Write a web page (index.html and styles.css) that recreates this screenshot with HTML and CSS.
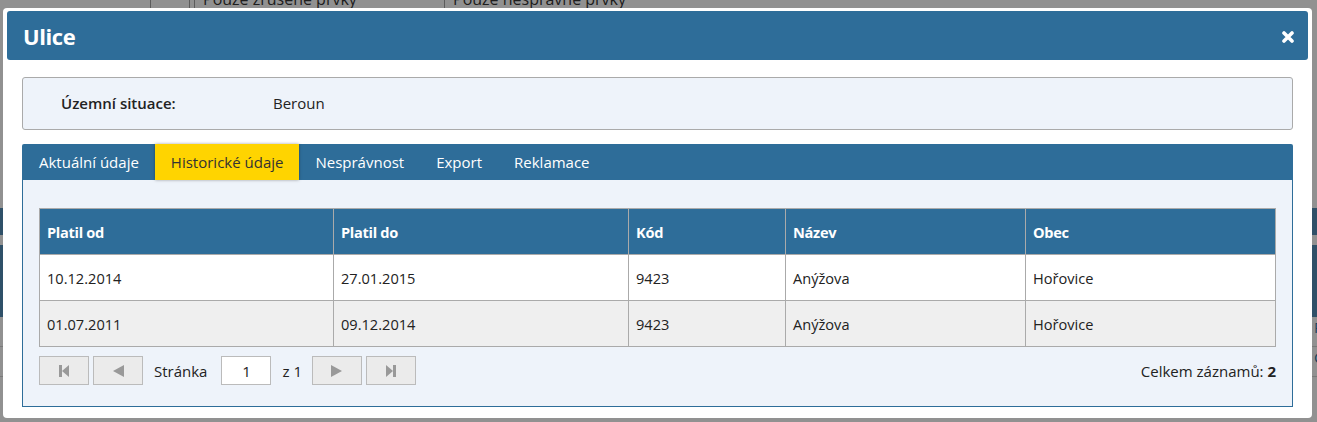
FILE: index.html
```html
<!DOCTYPE html>
<html lang="cs">
<head>
<meta charset="utf-8">
<title>Ulice</title>
<link rel="stylesheet" href="styles.css">
</head>
<body>
<div class="page">
  <div class="page-filters">
    <span class="pf-caret">▼</span>
    <span class="pf-sep"></span>
    <span class="pf-item">Pouze zrušené prvky</span>
    <span class="pf-item">Pouze nesprávné prvky</span>
  </div>
  <div class="page-band band1"></div>
  <div class="page-band band2"></div>
  <div class="page-line">Po</div>
  <div class="page-line">Ce</div>
</div>
<div class="overlay"></div>

<div class="dialog">
  <div class="dlg-header">
    <h1 class="dlg-title">Ulice</h1>
    <span class="dlg-close" aria-label="Zavřít">
      <svg width="12" height="12" viewBox="0 0 12 12"><path d="M2 2 L10 10 M10 2 L2 10" stroke="#fff" stroke-width="3.6" stroke-linecap="round"/></svg>
    </span>
  </div>
  <div class="dlg-body">
    <div class="info">
      <span class="info-label">Územní situace:</span>
      <span class="info-value">Beroun</span>
    </div>
    <div class="tabs">
      <div class="tab-bar">
        <span class="tab">Aktuální údaje</span>
        <span class="tab active">Historické údaje</span>
        <span class="tab">Nesprávnost</span>
        <span class="tab">Export</span>
        <span class="tab">Reklamace</span>
      </div>
      <div class="tab-content">
        <table class="grid">
          <colgroup>
            <col style="width:294px"><col style="width:295px"><col style="width:157px"><col style="width:240px"><col>
          </colgroup>
          <thead>
            <tr><th>Platil od</th><th>Platil do</th><th>Kód</th><th>Název</th><th>Obec</th></tr>
          </thead>
          <tbody>
            <tr><td>10.12.2014</td><td>27.01.2015</td><td>9423</td><td>Anýžova</td><td>Hořovice</td></tr>
            <tr class="alt"><td>01.07.2011</td><td>09.12.2014</td><td>9423</td><td>Anýžova</td><td>Hořovice</td></tr>
          </tbody>
        </table>
        <div class="pager">
          <div class="pager-left">
            <span class="pbtn"><svg width="12" height="14" viewBox="0 0 12 14"><rect x="1" y="1" width="3" height="12" fill="#999"/><path d="M11 1 L4 7 L11 13 Z" fill="#999"/></svg></span>
            <span class="pbtn"><svg width="14" height="14" viewBox="0 0 14 14"><path d="M13 1 L2 7 L13 13 Z" fill="#999"/></svg></span>
            <span class="plabel page-word">Stránka</span>
            <span class="pinput">1</span>
            <span class="plabel page-of">z 1</span>
            <span class="pbtn"><svg width="14" height="14" viewBox="0 0 14 14"><path d="M1 1 L12 7 L1 13 Z" fill="#999"/></svg></span>
            <span class="pbtn"><svg width="12" height="14" viewBox="0 0 12 14"><path d="M1 1 L8 7 L1 13 Z" fill="#999"/><rect x="8" y="1" width="3" height="12" fill="#999"/></svg></span>
          </div>
          <div class="pager-total">Celkem záznamů: <b>2</b></div>
        </div>
      </div>
    </div>
  </div>
</div>
</body>
</html>
```

FILE: styles.css
```css
* { box-sizing: border-box; }
html, body { margin: 0; padding: 0; }
body {
  width: 1317px;
  height: 422px;
  overflow: hidden;
  position: relative;
  font-family: "Open Sans", "Noto Sans", "Liberation Sans", sans-serif;
  font-size: 15px;
  color: #222;
  background: #f2f2f2;
}

/* background page (dimmed) */
.page { height: 100%; }
.page-filters {
  display: flex;
  align-items: flex-end;
  height: 8px;
  overflow: hidden;
  font-size: 16px;
  line-height: 18px;
  color: #333;
}
.pf-caret { width: 150px; text-align: right; font-size: 10px; padding-right: 10px; margin-bottom: 4px; }
.pf-sep { width: 40px; height: 18px; border-left: 1px solid #999; border-right: 1px solid #999; margin-right: 4px; }
.pf-item { width: 250px; padding-left: 8px; border-left: 1px solid #999; height: 18px; margin-top: -6px; }
.page-band { background: #4f86ad; margin-top: 200px; height: 27px; }
.page-band.band2 { margin-top: 10px; height: 72px; }
.page-line { height: 30px; border-bottom: 1px solid #ccc; padding-left: 1314px; color: #2e6d99; }
.overlay {
  position: absolute;
  inset: 0;
  background: rgba(0, 0, 0, 0.4);
}

/* dialog */
.dialog {
  position: absolute;
  left: 3px;
  top: 8px;
  width: 1309px;
  height: 410px;
  background: #fff;
  border-radius: 4px;
  padding: 3px 4px;
  display: flex;
  flex-direction: column;
}
.dlg-header {
  height: 49px;
  background: #2e6d99;
  border-radius: 3px;
  display: flex;
  align-items: center;
  justify-content: space-between;
  padding: 0 14px 0 16px;
}
.dlg-title {
  margin: 0;
  color: #fff;
  font-size: 22px;
  font-weight: 700;
  letter-spacing: -0.4px;
}
.dlg-close { display: flex; margin-top: 2px; }

.dlg-body {
  padding: 17px 15px 0;
  display: flex;
  flex-direction: column;
}
.info {
  height: 53px;
  background: #eef3fa;
  border: 1px solid #aaa;
  border-radius: 3px;
  display: flex;
  align-items: center;
  padding-left: 38px;
  padding-bottom: 1px;
}
.info-label { width: 212px; font-weight: 600; }

.tabs { margin-top: 14px; }
.tab-bar {
  height: 36px;
  background: #2e6d99;
  display: flex;
  padding-left: 1px;
  border-radius: 2px 2px 0 0;
}
.tab {
  padding: 0 16px;
  display: flex;
  align-items: center;
  color: #fff;
  padding-bottom: 1px;
}
.tab.active {
  background: #ffd400;
  color: #333;
  box-shadow: 0 0 3px rgba(0,0,0,0.35);
}
.tab-content {
  height: 227px;
  background: #eef3fa;
  border: 1px solid #2e6d99;
  border-top: 0;
  padding: 28px 16px 0;
}

.grid {
  width: 100%;
  border-collapse: collapse;
  table-layout: fixed;
}
.grid th, .grid td {
  border: 1px solid #aaa;
  height: 46px;
  padding: 0 7px;
  text-align: left;
  font-size: 14.6px;
}
.grid th {
  background: #2e6d99;
  color: #fff;
  font-weight: 700;
  letter-spacing: -0.3px;
}
.grid td { background: #fff; }
.grid tr.alt td { background: #efefef; }

.pager {
  margin-top: 9px;
  display: flex;
  justify-content: space-between;
  align-items: center;
}
.pager-left { display: flex; align-items: center; gap: 4px; }
.pbtn {
  width: 50px;
  height: 29px;
  background: #ebebeb;
  border: 1px solid #bbb;
  display: flex;
  align-items: center;
  justify-content: center;
}
.page-word { padding: 0 10px 0 7px; }
.page-of { padding: 0 6px 0 7px; }
.pinput {
  width: 50px;
  height: 29px;
  background: #fff;
  border: 1px solid #bbb;
  display: flex;
  align-items: center;
  justify-content: center;
}
.pager-total b { font-weight: 700; }
```
